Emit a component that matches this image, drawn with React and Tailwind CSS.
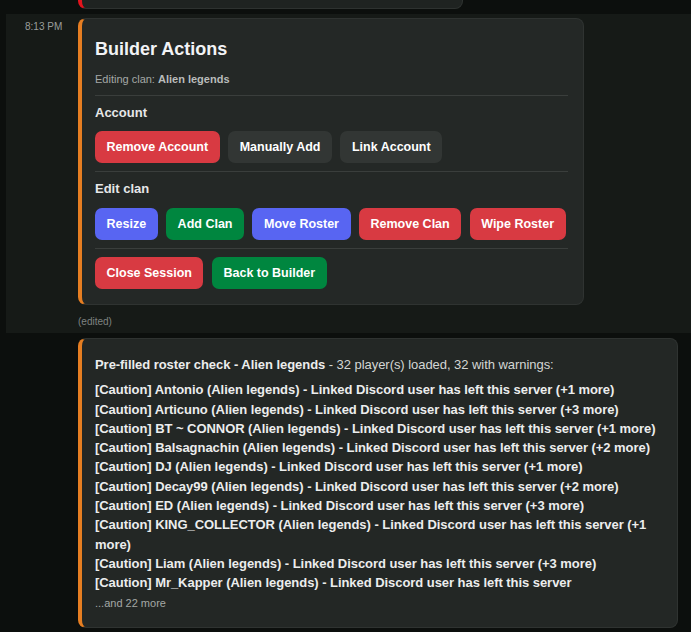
const warnings = [
  { name: 'Antonio', more: 1 },
  { name: 'Articuno', more: 3 },
  { name: 'BT ~ CONNOR', more: 1 },
  { name: 'Balsagnachin', more: 2 },
  { name: 'DJ', more: 1 },
  { name: 'Decay99', more: 2 },
  { name: 'ED', more: 3 },
  { name: 'KING_COLLECTOR', more: 1 },
  { name: 'Liam', more: 3 },
  { name: 'Mr_Kapper', more: 0 },
];

const tones = {
  danger: 'bg-[#d83a42]',
  success: 'bg-[#00863f]',
  primary: 'bg-[#5865f2]',
  secondary: 'bg-[#323634]',
};

const ActionButton = ({ tone, children }) => (
  <button
    className={`h-8 px-[11.5px] rounded-[7px] text-[12.5px] font-bold text-white ${tones[tone]}`}
  >
    {children}
  </button>
);

const Divider = () => <div className="h-px bg-[#3a3e3c]" />;

export default function App() {
  return (
    <div className="h-[632px] overflow-hidden bg-[#0c0f0d] font-['Liberation_Sans',Arial,sans-serif]">
      {/* tail of the previous message */}
      <div className="h-[14px] flex items-end pl-[78px] pb-[5px] overflow-hidden">
        <div className="w-[385px] h-[40px] shrink-0 rounded-lg bg-[#1f2321] border border-[#2e3230] border-l-4 border-l-[#e3141d]" />
      </div>

      {/* hovered message */}
      <div className="ml-[6px] bg-[#161a17] pt-1 pb-1 flex">
        <div className="w-[72px] shrink-0 pl-[19px] pt-[2px] text-[10px] leading-[14px] text-[#9a9e9c]">
          8:13 PM
        </div>
        <div>
          <div className="w-[506px] rounded-lg bg-[#242826] border border-[#2f3331] border-l-4 border-l-[#e67e22] pt-[18px] pb-[15px] pl-[13px] pr-[15px] flex flex-col">
            <h2 className="text-[18px] leading-6 font-bold text-[#f2f3f5]">Builder Actions</h2>
            <p className="mt-[10px] text-[11px] leading-4 text-[#a5a9a7]">
              Editing clan: <span className="font-bold text-[#b9bcbb]">Alien legends</span>
            </p>
            <div className="mt-2">
              <Divider />
            </div>
            <div className="mt-2 text-[13px] leading-[18px] font-bold text-[#e6e7e8]">Account</div>
            <div className="mt-[9px] flex gap-[8.5px]">
              <ActionButton tone="danger">Remove Account</ActionButton>
              <ActionButton tone="secondary">Manually Add</ActionButton>
              <ActionButton tone="secondary">Link Account</ActionButton>
            </div>
            <div className="mt-2">
              <Divider />
            </div>
            <div className="mt-2 text-[13px] leading-[18px] font-bold text-[#e6e7e8]">Edit clan</div>
            <div className="mt-[10px] flex gap-[8.5px]">
              <ActionButton tone="primary">Resize</ActionButton>
              <ActionButton tone="success">Add Clan</ActionButton>
              <ActionButton tone="primary">Move Roster</ActionButton>
              <ActionButton tone="danger">Remove Clan</ActionButton>
              <ActionButton tone="danger">Wipe Roster</ActionButton>
            </div>
            <div className="mt-2">
              <Divider />
            </div>
            <div className="mt-2 flex gap-[8.5px]">
              <ActionButton tone="danger">Close Session</ActionButton>
              <ActionButton tone="success">Back to Builder</ActionButton>
            </div>
          </div>
          <div className="mt-[10px] text-[10px] leading-[14px] text-[#7f8381]">(edited)</div>
        </div>
      </div>

      {/* next message */}
      <div className="pt-[5px] pl-[78px]">
        <div className="w-[600px] rounded-lg bg-[#232725] border border-[#2f3331] border-l-4 border-l-[#e67e22] pt-4 pb-4 pl-[13px] pr-[15px] text-[13px] leading-[19.3px] tracking-[-0.05px]">
          <p className="text-[#d3d6d4]">
            <span className="font-bold text-[#eceded]">Pre-filled roster check - Alien legends</span>
            {' '}- 32 player(s) loaded, 32 with warnings:
          </p>
          <div className="mt-[6px] font-bold text-[#eceded]">
            {warnings.map(w => (
              <div key={w.name}>
                [Caution] {w.name} (Alien legends) - Linked Discord user has left this server
                {w.more ? ` (+${w.more}` : ''}
                {w.more ? ' ' : ''}
                {w.more ? 'more)' : ''}
              </div>
            ))}
          </div>
          <div className="mt-[2px] text-[11px] leading-4 tracking-normal text-[#a3a7a5]">...and 22 more</div>
        </div>
      </div>
    </div>
  );
}
